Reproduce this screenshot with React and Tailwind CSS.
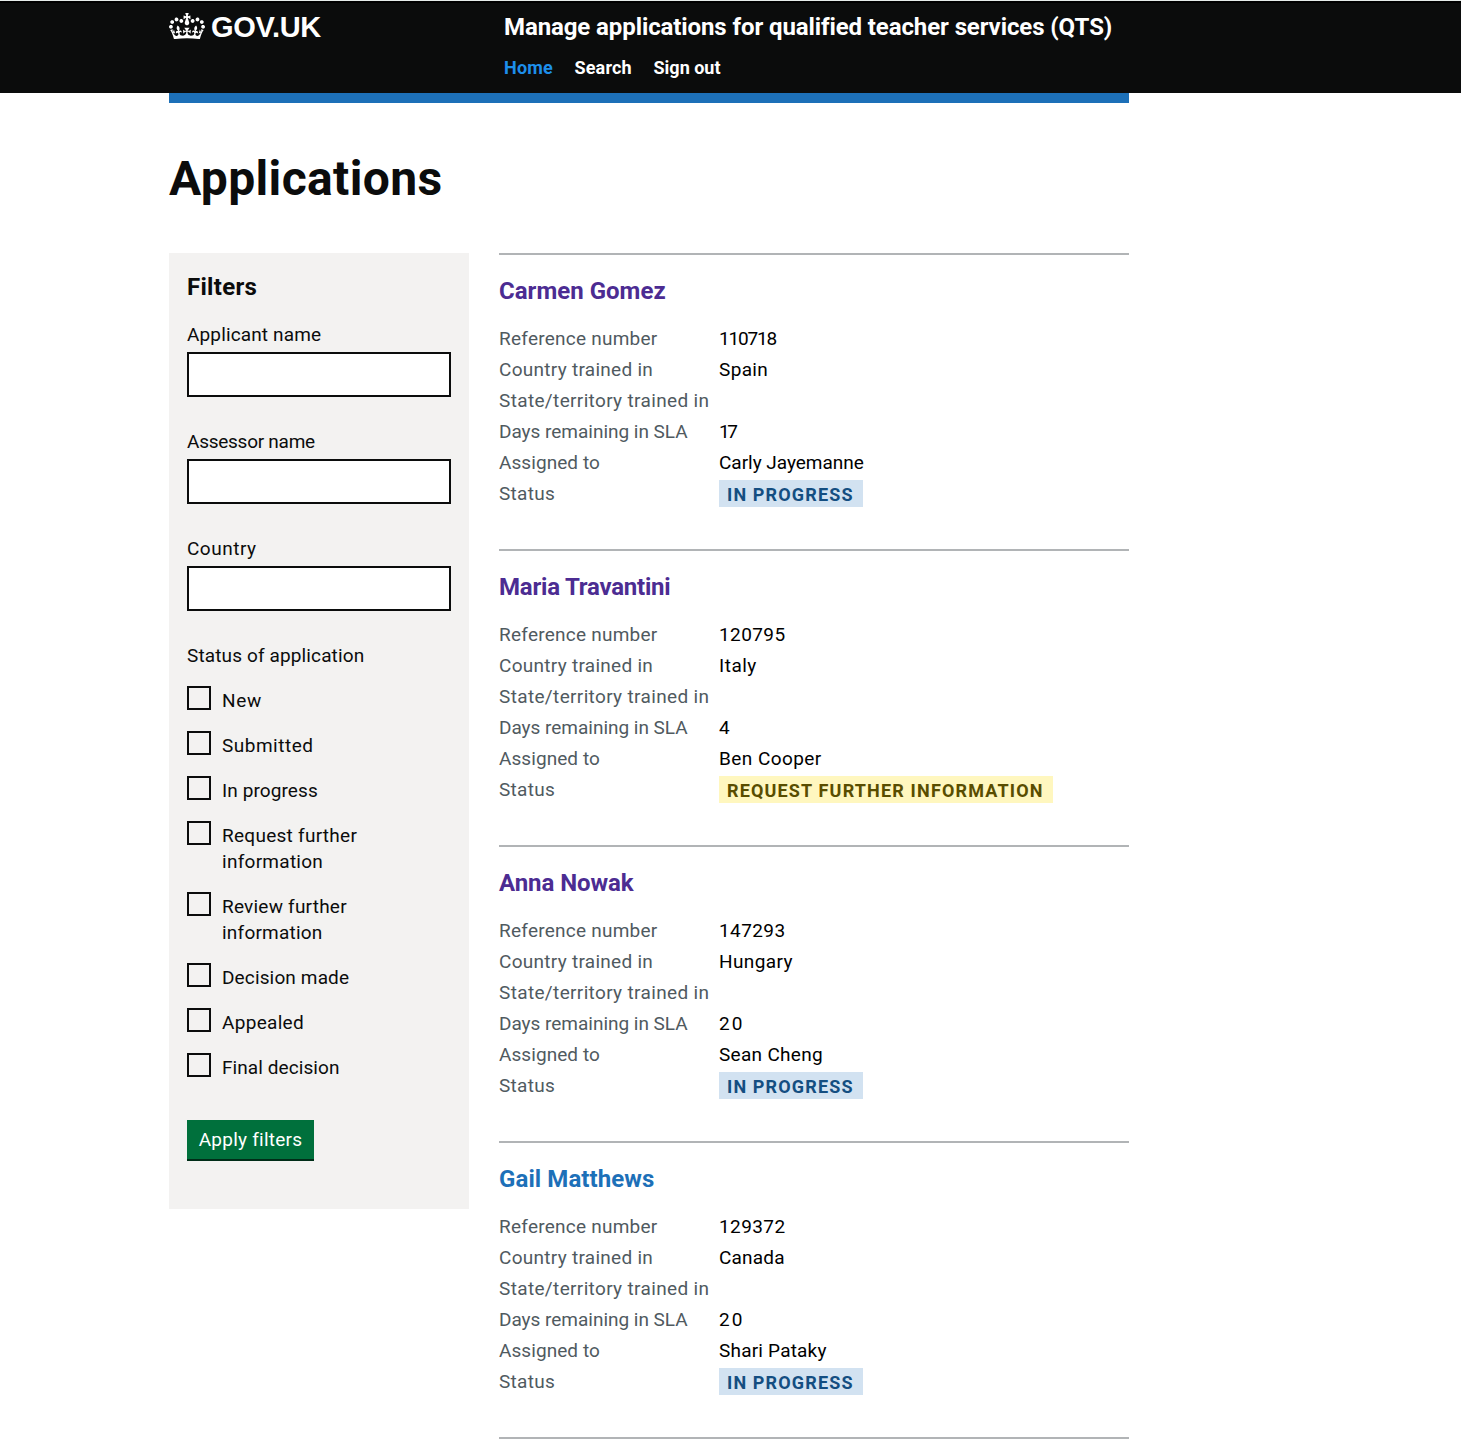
const TRACKING = {
  "Applicant name": "tracking-[0.14px]",
  "Assessor name": "tracking-[-0.26px]",
  Country: "tracking-[0.5px]",
  "Status of application": "tracking-[0.13px]",
  New: "tracking-[0.7px]",
  Submitted: "tracking-[0.5px]",
  "In progress": "tracking-[0.1px]",
  "Request further information": "tracking-[0.27px]",
  "Review further information": "tracking-[0.22px]",
  "Decision made": "tracking-[0.14px]",
  Appealed: "tracking-[0.31px]",
  "Final decision": "tracking-[0.08px]",
  "Carmen Gomez": "tracking-[0.02px]",
  "Maria Travantini": "tracking-[-0.21px]",
  "Anna Nowak": "tracking-[-0.06px]",
  "Gail Matthews": "tracking-[0.09px]",
  "Reference number": "tracking-[0.24px]",
  "Country trained in": "tracking-[0.28px]",
  "State/territory trained in": "tracking-[0.35px]",
  "Days remaining in SLA": "tracking-[-0.02px]",
  "Assigned to": "tracking-[0.07px]",
  Status: "tracking-[0.3px]",
  110718: "tracking-[-1.2px]",
  120795: "tracking-[0.4px]",
  147293: "tracking-[0.4px]",
  129372: "tracking-[0.4px]",
  17: "tracking-[-2.4px]",
  20: "tracking-[2px]",
  Italy: "tracking-[0.5px]",
  Spain: "tracking-[0.35px]",
  Canada: "tracking-[0.2px]",
  "Carly Jayemanne": "tracking-[-0.03px]",
  "Ben Cooper": "tracking-[0.44px]",
  Hungary: "tracking-[0.38px]",
  "Sean Cheng": "tracking-[0.3px]",
  "Shari Pataky": "tracking-[0.2px]",
  "In progress tag": "tracking-[1.14px]",
  "Request further information tag": "tracking-[1.16px]",
};

const FIELDS = ["Applicant name", "Assessor name", "Country"];

const STATUSES = [
  "New",
  "Submitted",
  "In progress",
  "Request further information",
  "Review further information",
  "Decision made",
  "Appealed",
  "Final decision",
];

const APPLICATIONS = [
  { name: "Carmen Gomez", visited: true, reference: "110718", country: "Spain", days: "17", assignee: "Carly Jayemanne", status: "In progress" },
  { name: "Maria Travantini", visited: true, reference: "120795", country: "Italy", days: "4", assignee: "Ben Cooper", status: "Request further information" },
  { name: "Anna Nowak", visited: true, reference: "147293", country: "Hungary", days: "20", assignee: "Sean Cheng", status: "In progress" },
  { name: "Gail Matthews", visited: false, reference: "129372", country: "Canada", days: "20", assignee: "Shari Pataky", status: "In progress" },
];

const TAG_COLOURS = {
  "In progress": "bg-[#d2e2f1] text-[#144e81]",
  "Request further information": "bg-[#fff7bf] text-[#594d00]",
};

function Crown() {
  return (
    <svg className="mt-[12.5px] h-[26.5px] w-9 shrink-0" viewBox="0 0 132 97" fill="currentColor" aria-hidden="true">
      <path
        fillRule="evenodd"
        d="M25 30.2c3.5 1.5 7.7-.2 9.1-3.7 1.5-3.6-.2-7.8-3.9-9.2-3.6-1.4-7.6.3-9.1 3.9-1.4 3.5.3 7.5 3.9 9zM9 39.5c3.6 1.5 7.8-.2 9.2-3.7 1.5-3.6-.2-7.8-3.9-9.1-3.6-1.5-7.6.2-9.1 3.8-1.4 3.5.3 7.5 3.8 9zM4.4 57.2c3.5 1.5 7.7-.2 9.1-3.8 1.5-3.6-.2-7.7-3.9-9.1-3.5-1.5-7.6.3-9.1 3.8-1.4 3.5.3 7.6 3.9 9.1zm38.3-21.4c3.5 1.5 7.7-.2 9.1-3.8 1.5-3.6-.2-7.7-3.9-9.1-3.6-1.5-7.6.3-9.1 3.8-1.3 3.6.4 7.7 3.9 9.1zm64.4-5.6c-3.6 1.5-7.8-.2-9.1-3.7-1.5-3.6.2-7.8 3.8-9.2 3.6-1.4 7.7.3 9.2 3.9 1.3 3.5-.4 7.5-3.9 9zm15.9 9.3c-3.6 1.5-7.7-.2-9.1-3.7-1.5-3.6.2-7.8 3.7-9.1 3.6-1.5 7.7.2 9.2 3.8 1.5 3.5-.3 7.5-3.8 9zm4.7 17.7c-3.6 1.5-7.8-.2-9.2-3.8-1.5-3.6.2-7.7 3.9-9.1 3.6-1.5 7.7.3 9.2 3.8 1.3 3.5-.4 7.6-3.9 9.1zM89.3 35.8c-3.6 1.5-7.8-.2-9.2-3.8-1.4-3.6.2-7.7 3.9-9.1 3.6-1.5 7.7.3 9.2 3.8 1.4 3.6-.3 7.7-3.9 9.1zM69.7 17.7l8.9 4.7V9.3l-8.9 2.8c-.2-.3-.5-.6-.9-.9L72.4 0H59.6l3.5 11.2c-.3.3-.6.5-.9.9l-8.8-2.8v13.1l8.8-4.7c.3.3.6.7.9.9l-5 15.4v.1c-.2.8-.4 1.6-.4 2.4 0 4.1 3.1 7.5 7 8.1h.2c.3 0 .7.1 1 .1.4 0 .7 0 1-.1h.2c4-.6 7.1-4.1 7.1-8.1 0-.8-.1-1.7-.4-2.4V34l-5.1-15.4c.4-.2.7-.6 1-.9zM66 92.8c16.9 0 32.8 1.1 47.1 3.2 4-16.9 8.9-26.7 14-33.5l-9.6-3.4c1 4.9 1.1 7.2 0 10.2-1.5-1.4-3-4.3-4.2-8.7L108.6 76c2.8-2 5-3.2 7.5-3.3-4.4 9.4-10 11.9-13.6 11.2-4.3-.8-6.3-4.6-5.6-7.9 1-4.7 5.7-5.9 8-.5 4.3-8.7-3-11.4-7.6-8.8 7.1-7.2 7.9-13.5 2.1-21.1-8 6.1-8.1 12.3-4.5 20.8-4.7-5.4-12.1-2.5-9.5 6.2 3.4-5.2 7.9-2 7.2 3.1-.6 4.3-6.4 7.8-13.5 7.2-10.3-.9-10.9-8-11.2-13.8 2.5-.5 7.1 1.8 11 7.3L80.2 60c-4.1 4.4-8 5.3-12.3 5.4 1.4-4.4 8-11.6 8-11.6H55.5s6.4 7.2 7.9 11.6c-4.2-.1-8-1-12.3-5.4l1.4 16.4c3.9-5.5 8.5-7.7 10.9-7.3-.3 5.8-.9 12.8-11.1 13.8-7.2.6-12.9-2.9-13.5-7.2-.7-5 3.8-8.3 7.1-3.1 2.7-8.7-4.6-11.6-9.4-6.2 3.7-8.5 3.6-14.7-4.6-20.8-5.8 7.6-5 13.9 2.2 21.1-4.7-2.6-11.9.1-7.7 8.8 2.3-5.5 7.1-4.2 8.1.5.7 3.3-1.3 7.1-5.7 7.9-3.5.7-9-1.8-13.5-11.2 2.5.1 4.7 1.3 7.5 3.3l-4.7-15.4c-1.2 4.4-2.7 7.2-4.3 8.7-1.1-3-.9-5.3 0-10.2l-9.5 3.4c5 6.9 9.9 16.7 14 33.5 14.8-2.1 30.8-3.2 47.7-3.2z"
      />
    </svg>
  );
}

function Header() {
  return (
    <header className="h-[93px] border-t border-[#e6ecea] bg-[#0b0c0c] text-white">
      <div className="h-[2px] bg-black" />
      <div className="ml-[169px] flex h-[90px] w-[960px]">
        <a href="#" className="-mt-[3px] flex w-[335px]">
          <Crown />
          <span className="ml-[6px] mt-[11px] font-['Liberation_Sans',sans-serif] text-[29px] leading-8 font-bold tracking-[-0.3px]">GOV.UK</span>
        </a>
        <div className="whitespace-nowrap">
          <div className="mt-[9px] text-[24px] leading-[30px] font-bold tracking-[-0.1px]">
            Manage applications for qualified teacher services (QTS)
          </div>
          <nav className="mt-[14px] flex text-[18px] leading-6 font-bold">
            <a href="#" className="w-[70.5px] tracking-[0.18px] text-[#1d8feb]">Home</a>
            <a href="#" className="w-[79px] tracking-[0.15px]">Search</a>
            <a href="#">Sign out</a>
          </nav>
        </div>
      </div>
    </header>
  );
}

function Filters() {
  return (
    <form className="h-[956px] w-[300px] bg-[#f3f2f1] px-[18px] pt-[19px] text-[19px]">
      <h2 className="mb-5 text-[24px] leading-[30px] font-bold tracking-[0.3px]">Filters</h2>
      {FIELDS.map((label) => (
        <label key={label} className={`mb-8 block leading-[25px] ${TRACKING[label]}`}>
          {label}
          <input type="text" className="mt-[5px] block h-[45px] w-full border-2 border-[#0b0c0c] bg-white px-1" />
        </label>
      ))}
      <fieldset>
        <legend className={`mb-[18px] leading-[25px] ${TRACKING["Status of application"]}`}>Status of application</legend>
        {STATUSES.map((status) => (
          <label key={status} className="mb-[17px] flex">
            <input type="checkbox" className="size-6 shrink-0 appearance-none border-2 border-[#0b0c0c]" />
            <span className={`ml-[11px] w-[160px] pt-[2px] leading-[26px] ${TRACKING[status]}`}>{status}</span>
          </label>
        ))}
      </fieldset>
      <button type="button" className="mt-[22px] h-[39px] w-[127px] bg-[#00703c] leading-[39px] tracking-[0.24px] text-white shadow-[0_2px_0_#002d18]">
        Apply filters
      </button>
    </form>
  );
}

function Row({ label, children }) {
  return (
    <div className="flex h-[31px]">
      <dt className={`w-[220px] whitespace-nowrap text-[#505a5f] ${TRACKING[label]}`}>{label}</dt>
      <dd className={`whitespace-nowrap text-black ${TRACKING[children] ?? ""}`}>{children}</dd>
    </div>
  );
}

function Application({ item }) {
  return (
    <li className="border-t-2 border-[#b1b4b6] pt-[21px] pb-10">
      <h2 className={`mb-[17px] text-[24px] leading-[30px] font-bold ${TRACKING[item.name]}`}>
        <a href="#" className={item.visited ? "text-[#4c2c92]" : "text-[#1d70b8]"}>{item.name}</a>
      </h2>
      <dl className="text-[19px] leading-[31px]">
        <Row label="Reference number">{item.reference}</Row>
        <Row label="Country trained in">{item.country}</Row>
        <Row label="State/territory trained in" />
        <Row label="Days remaining in SLA">{item.days}</Row>
        <Row label="Assigned to">{item.assignee}</Row>
        <Row label="Status">
          <strong className={`mt-[2px] block h-[27px] pt-[2px] pr-[9px] pl-2 text-[18px] leading-[25px] font-bold uppercase ${TAG_COLOURS[item.status]} ${TRACKING[item.status + " tag"]}`}>
            {item.status}
          </strong>
        </Row>
      </dl>
    </li>
  );
}

export default function App() {
  return (
    <div className="h-[1446px] overflow-hidden bg-white font-[Roboto,sans-serif] text-[#0b0c0c]">
      <Header />
      <main className="ml-[169px] w-[960px] border-t-10 border-[#1d70b8]">
        <h1 className="pt-[46px] text-[48px] leading-[60px] font-bold tracking-[0.35px]">Applications</h1>
        <div className="mt-[44px] flex items-start gap-[30px]">
          <Filters />
          <ul className="w-[630px] border-b-2 border-[#b1b4b6]">
            {APPLICATIONS.map((item) => (
              <Application key={item.name} item={item} />
            ))}
          </ul>
        </div>
      </main>
    </div>
  );
}
